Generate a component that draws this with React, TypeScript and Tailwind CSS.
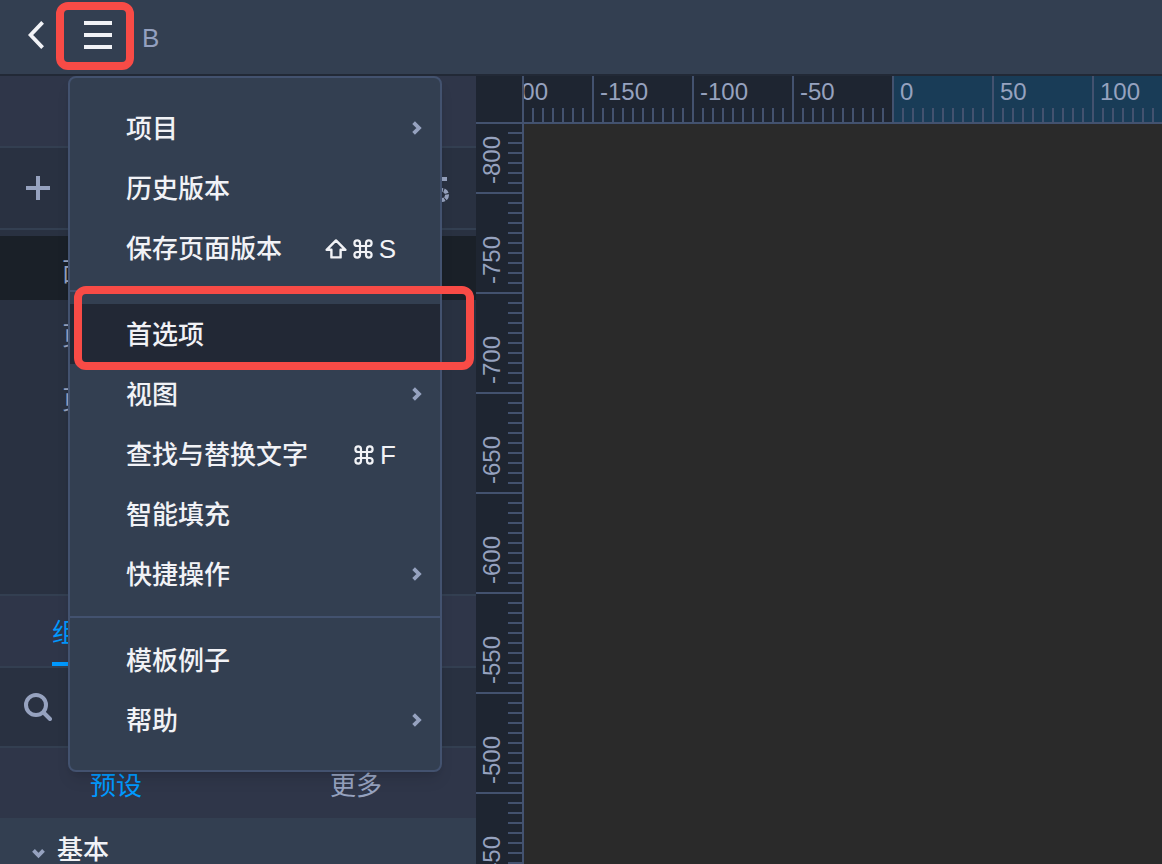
import type { ReactNode } from 'react'

interface MenuEntry {
  label: string
  submenu?: boolean
  active?: boolean
  shortcut?: ReactNode
}

function ShiftIcon() {
  return (
    <svg width="22" height="20" viewBox="0 0 22 20" fill="none" stroke="currentColor" strokeWidth="2.4" strokeLinejoin="round" aria-hidden="true">
      <path d="M11 1.4 20.4 10.8H15.6V18.4H6.4V10.8H1.6Z" />
    </svg>
  )
}

function CommandIcon() {
  return (
    <svg width="20" height="20" viewBox="0 0 20 20" fill="none" stroke="currentColor" strokeWidth="2.2" aria-hidden="true">
      <path d="M7 7V4.2A2.8 2.8 0 1 0 4.2 7H15.8A2.8 2.8 0 1 0 13 4.2V15.8A2.8 2.8 0 1 0 15.8 13H4.2A2.8 2.8 0 1 0 7 15.8Z" />
    </svg>
  )
}

function SubmenuArrow() {
  return (
    <svg width="10" height="14" viewBox="0 0 10 14" fill="none" stroke="#96a2bf" strokeWidth="3.8" aria-hidden="true">
      <path d="M1.6 1.6 7 7 1.6 12.4" />
    </svg>
  )
}

// Groups are separated by a divider
const menuGroups: MenuEntry[][] = [
  [
    { label: '项目', submenu: true },
    { label: '历史版本' },
    { label: '保存页面版本', shortcut: <><ShiftIcon /><CommandIcon /><span>S</span></> },
  ],
  [
    { label: '首选项', active: true },
    { label: '视图', submenu: true },
    { label: '查找与替换文字', shortcut: <><CommandIcon /><span>F</span></> },
    { label: '智能填充' },
    { label: '快捷操作', submenu: true },
  ],
  [
    { label: '模板例子' },
    { label: '帮助', submenu: true },
  ],
]

const horizontalMarks = [-200, -150, -100, -50, 0, 50, 100]
const verticalMarks = [-800, -750, -700, -650, -600, -550, -500, -450]
const minorTicks = [1, 2, 3, 4, 5, 6, 7, 8, 9]

function MenuItem({ label, submenu, active, shortcut }: MenuEntry) {
  return (
    <button
      type="button"
      role="menuitem"
      className={`flex h-[60px] w-full items-center pl-14 text-left ${submenu ? 'pr-[18px]' : 'pr-11'} ${active ? 'bg-[#222835]' : ''}`}
    >
      <span className="flex-1 pt-0.5">{label}</span>
      {shortcut && <span className="flex items-center gap-1.5 pt-0.5">{shortcut}</span>}
      {submenu && <SubmenuArrow />}
    </button>
  )
}

function MainMenu() {
  return (
    <div
      role="menu"
      className="absolute top-[76px] left-[68px] z-10 w-[374px] rounded-lg border-2 border-[#43526f] bg-[#333f51] py-5 text-[26px] leading-9 font-medium text-[#f1f2f6] shadow-lg"
    >
      {menuGroups.map((group, i) => (
        <div key={i} className={i > 0 ? 'mt-3 border-t-2 border-[#43526f] pt-3' : ''}>
          {group.map((item) => (
            <MenuItem key={item.label} {...item} />
          ))}
        </div>
      ))}
    </div>
  )
}

function Header() {
  return (
    <header className="flex h-[76px] shrink-0 items-center border-b-2 border-[#222936] bg-[#333f51] pb-1 pl-7 text-[#f1f2f6]">
      <button type="button" aria-label="返回">
        <svg width="16" height="28" viewBox="0 0 16 28" fill="none" stroke="currentColor" strokeWidth="3.8" aria-hidden="true">
          <path d="M14.6 1.4 2.6 14 14.6 26.6" />
        </svg>
      </button>
      <div className="relative ml-10">
        <button type="button" aria-label="菜单" className="flex w-7 flex-col gap-2">
          <span className="h-1 bg-current" />
          <span className="h-1 bg-current" />
          <span className="h-1 bg-current" />
        </button>
        <div className="pointer-events-none absolute -top-[19px] -left-7 h-[68px] w-[78px] rounded-xl border-8 border-[#f84b46]" />
      </div>
      <span className="ml-[30px] pt-1.5 text-[26px] leading-9 text-[#94a0bf]">B</span>
    </header>
  )
}

function Sidebar() {
  return (
    <aside className="flex w-[476px] shrink-0 flex-col overflow-hidden bg-[#293141] text-[26px] leading-9 text-[#96a2bf]">
      <div className="h-[72px] shrink-0 border-b-2 border-[#333f51] bg-[#2f3649]" />
      <div className="flex h-[82px] shrink-0 items-center justify-between border-b-2 border-[#333f51] px-[26px]">
        <button type="button" aria-label="添加页面">
          <svg width="24" height="24" viewBox="0 0 24 24" stroke="currentColor" strokeWidth="4" aria-hidden="true">
            <path d="M12 0V24M0 12H24" />
          </svg>
        </button>
        <button type="button" aria-label="设置">
          <svg width="26" height="28" viewBox="0 0 26 28" fill="none" stroke="currentColor" strokeWidth="4" aria-hidden="true">
            <path d="M0 5H23" />
            <circle cx="18" cy="21" r="5" strokeDasharray="4 1" />
          </svg>
        </button>
      </div>
      <ul className="h-[364px] shrink-0 pt-[6px]">
        <li className="flex h-16 items-center bg-[#1a2028] pt-2 pl-[62px]">面</li>
        <li className="flex h-16 items-center pt-2 pl-[62px]">页</li>
        <li className="flex h-16 items-center pt-2 pl-[62px]">页</li>
      </ul>
      <div className="flex h-[74px] shrink-0 items-end border-y-2 border-[#333f51] bg-[#2f3649] pl-[52px]">
        <button type="button" className="h-[70px] border-b-4 border-[#0099ff] pt-2 text-[#0099ff]">组件</button>
      </div>
      <div className="flex h-20 shrink-0 items-center border-b-2 border-[#333f51] pl-6">
        <button type="button" aria-label="搜索">
          <svg width="28" height="28" viewBox="0 0 28 28" fill="none" stroke="currentColor" strokeWidth="4" strokeLinecap="round" aria-hidden="true">
            <circle cx="12" cy="12" r="10" />
            <path d="M19.5 19.5 26 26" />
          </svg>
        </button>
      </div>
      <div className="flex h-[70px] shrink-0 items-center bg-[#2f3649] pt-1.5">
        <button type="button" className="w-[232px] text-[#0099ff]">预设</button>
        <button type="button" className="flex-1 pl-1">更多</button>
      </div>
      <div className="flex-1 bg-[#333f51] pt-0.5">
        <button type="button" className="flex h-[60px] items-center gap-3 pl-8 font-medium text-[#f1f2f6]">
          <svg width="13" height="18" viewBox="0 0 13 18" fill="none" stroke="#96a2bf" strokeWidth="3.8" aria-hidden="true">
            <path d="M1.5 9.4 6.5 14.6 11.5 9.4" />
          </svg>
          基本
        </button>
      </div>
    </aside>
  )
}

function HorizontalRuler() {
  return (
    <div className="flex h-12 overflow-hidden border-b-2 border-[#43526f]">
      <div className="-ml-8 flex shrink-0">
        {horizontalMarks.map((mark) => (
          <div
            key={mark}
            className={`flex w-[100px] shrink-0 flex-col justify-between border-l-2 border-[#43526f] ${mark >= 0 ? 'bg-[#193c57]' : ''}`}
          >
            <span className="pl-1.5 leading-8">{mark}</span>
            <div className="flex h-[14px] pl-2">
              {minorTicks.map((tick) => (
                <span key={tick} className="w-[10px] shrink-0 border-l-2 border-[#43526f]" />
              ))}
            </div>
          </div>
        ))}
      </div>
      <div className="flex-1 bg-[#193c57]" />
    </div>
  )
}

function VerticalRuler() {
  return (
    <div className="w-12 shrink-0 overflow-hidden border-r-2 border-[#43526f] bg-[#1e2531]">
      <div className="-mt-[30px]">
        {verticalMarks.map((mark) => (
          <div key={mark} className="flex h-[100px] justify-between border-b-2 border-[#43526f]">
            <span className="rotate-180 pt-2 leading-8 [writing-mode:vertical-rl]">{mark}</span>
            <div className="w-[14px]">
              {minorTicks.map((tick) => (
                <div key={tick} className="h-[10px] border-b-2 border-[#43526f]" />
              ))}
            </div>
          </div>
        ))}
      </div>
    </div>
  )
}

function Workspace() {
  return (
    <main className="flex min-w-0 flex-1 flex-col bg-[#2a2a2a] font-['Liberation_Sans',sans-serif] text-2xl text-[#96a2bf]">
      <div className="flex shrink-0 bg-[#1e2531]">
        <div className="h-12 w-12 shrink-0 border-r-2 border-b-2 border-[#43526f]" />
        <div className="min-w-0 flex-1">
          <HorizontalRuler />
        </div>
      </div>
      <div className="flex min-h-0 flex-1">
        <VerticalRuler />
        <div className="flex-1" />
      </div>
    </main>
  )
}

export default function App() {
  return (
    <div className="relative flex h-screen flex-col overflow-hidden font-['Liberation_Sans','Noto_Sans_CJK_SC',sans-serif]">
      <Header />
      <div className="flex min-h-0 flex-1">
        <Sidebar />
        <Workspace />
      </div>
      <MainMenu />
      {/* Highlight around the preferences entry */}
      <div className="pointer-events-none absolute top-[286px] left-[74px] z-20 h-[84px] w-[400px] rounded-xl border-8 border-[#f84b46]" />
    </div>
  )
}
